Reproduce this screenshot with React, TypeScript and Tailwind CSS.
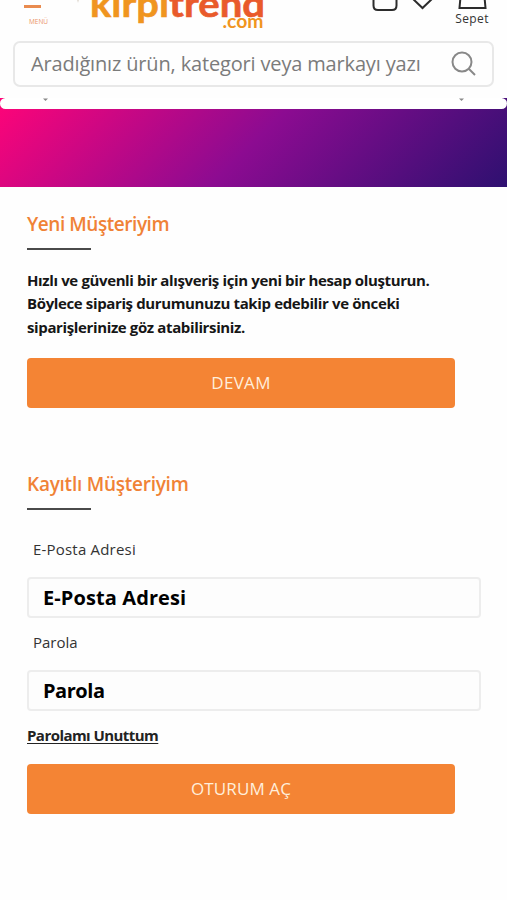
import type { ReactNode } from 'react';

interface FieldProps {
    id: string;
    label: string;
    type: string;
    labelClass: string;
    inputClass: string;
}

function SectionTitle({ className, children }: { className: string; children: ReactNode }) {
    return (
        <>
            <h2 className={`h-6 whitespace-nowrap text-[19px] leading-6 font-semibold text-[#f08236] ${className}`}>{children}</h2>
            <div className="mt-3 h-[2px] w-16 bg-[#4a4a4a]" />
        </>
    );
}

function Field({ id, label, type, labelClass, inputClass }: FieldProps) {
    return (
        <div>
            <label htmlFor={id} className={`block h-5 pl-[6px] text-[15px] leading-5 text-[#333] ${labelClass}`}>
                {label}
            </label>
            <input
                id={id}
                type={type}
                placeholder={label}
                className={`mt-[18px] block h-[41px] w-full rounded-[4px] border-2 border-[#ededed] bg-[#fdfdfd] px-[14px] text-xl font-bold text-black outline-none placeholder:text-black placeholder:opacity-100 ${inputClass}`}
            />
        </div>
    );
}

function Logo() {
    return (
        <svg className="absolute top-0 left-[76px]" width="192" height="32" viewBox="76 0 192 32" aria-label="kirpitrend.com">
            <path d="M77 0H79L78 3Z" fill="#e3ddd5" />
            <g fontFamily="Lato, 'Open Sans', sans-serif" fontWeight="700" strokeWidth="0.600">
                <text x="90" y="16.500" fontSize="36" fill="#f0951f" stroke="#f0951f" textLength="79" lengthAdjust="spacingAndGlyphs">kirpi</text>
                <text x="169" y="16.500" fontSize="36" fill="#e95a2b" stroke="#e95a2b" textLength="96" lengthAdjust="spacingAndGlyphs">trend</text>
                <text x="222.500" y="28" fontSize="18" fill="#f0951f" textLength="41" lengthAdjust="spacingAndGlyphs">.com</text>
            </g>
        </svg>
    );
}

function Header() {
    return (
        <header className="h-[98px] bg-[#fefefe]">
            <div className="relative flex h-[41px] justify-between overflow-hidden">
                <button className="flex w-[77px] flex-col items-center pt-[5px]">
                    <span className="mr-[13px] h-[3px] w-[17px] bg-[#e98b4f]" />
                    <span className="mt-[9px] text-[6.500px] leading-[10px] font-medium text-[#eb9468]">MENÜ</span>
                </button>
                <Logo />
                <div className="flex">
                    <svg width="68" height="12" viewBox="370 0 68 12" fill="none" stroke="#2c2c2c" strokeWidth="2">
                        <path d="M374.500 -4V5.500Q374.500 10 379 10H393Q397.500 10 397.500 5.500V-4" />
                        <path d="M412.500 -2.500L423.500 8L434.500 -2.500" />
                    </svg>
                    <div className="flex w-[70px] flex-col items-center">
                        <svg width="32" height="10" viewBox="0 0 32 10" fill="none" stroke="#2c2c2c" strokeWidth="2">
                            <path d="M4.500 -3L3.500 8H29.500L28.500 -3" />
                        </svg>
                        <span className="mt-px text-[12px] leading-4 font-medium tracking-[0.4px] text-[#333]">Sepet</span>
                    </div>
                </div>
            </div>
            <div className="mx-[13px] flex h-[46px] items-center rounded-[7px] border-2 border-[#e8e8e8] bg-[#fefefe] pl-[16px]">
                <input
                    type="text"
                    placeholder="Aradığınız ürün, kategori veya markayı yazın"
                    className="w-[389px] text-[20px] tracking-[-0.16px] text-[#777] outline-none placeholder:text-[#7b7b7b] placeholder:opacity-100"
                />
                <svg className="ml-[30px]" width="28" height="28" viewBox="0 0 28 28" fill="none" stroke="#888" strokeWidth="2">
                    <circle cx="12" cy="12" r="9.500" />
                    <path d="M18.500 18.500L25 25" />
                </svg>
            </div>
        </header>
    );
}

function Banner() {
    return (
        <div className="h-[89px] bg-[linear-gradient(135deg,#ff0478_0%,#8c0b91_50%,#2e1070_100%)]">
            <div className="flex h-[11px] justify-between rounded-[6px] bg-white px-[43px]">
                <svg width="5" height="3" viewBox="0 0 5 3"><path d="M0 0.500H5L2.500 3Z" fill="#888" /></svg>
                <svg width="5" height="3" viewBox="0 0 5 3"><path d="M0 0.500H5L2.500 3Z" fill="#888" /></svg>
            </div>
        </div>
    );
}

export default function App() {
    return (
        <div className="min-h-[900px] w-[507px] bg-[#fefefe] font-['Open_Sans','Noto_Sans',sans-serif]">
            <Header />
            <Banner />
            <main className="pr-[26px] pl-[27px]">
                <section className="pt-[25px]">
                    <SectionTitle className="tracking-[-0.450px]">Yeni Müşteriyim</SectionTitle>
                    <p className="mt-[19px] text-[15px] leading-[23.300px] font-bold tracking-[-0.370px] whitespace-nowrap text-[#161616]">
                        Hızlı ve güvenli bir alışveriş için yeni bir hesap oluşturun.
                        <br />
                        Böylece sipariş durumunuzu takip edebilir ve önceki
                        <br />
                        siparişlerinize göz atabilirsiniz.
                    </p>
                    <button className="mt-[19px] block h-[50px] w-[428px] rounded-[4px] bg-[#f48434] text-[17px] tracking-[0.3px] text-[#ffeedb]">DEVAM</button>
                </section>
                <section className="pt-[64px]">
                    <SectionTitle className="tracking-[-0.250px]">Kayıtlı Müşteriyim</SectionTitle>
                    <form className="mt-[29px] flex flex-col gap-[14px]">
                        <Field id="email" label="E-Posta Adresi" type="email" labelClass="tracking-[0.200px]" inputClass="tracking-[0.100px]" />
                        <Field id="password" label="Parola" type="password" labelClass="" inputClass="tracking-[-0.450px]" />
                    </form>
                    <a href="#" className="mt-[14px] block h-5 w-fit text-[15px] leading-5 font-bold tracking-[-0.550px] whitespace-nowrap text-[#222] underline underline-offset-2">
                        Parolamı Unuttum
                    </a>
                    <button className="mt-[19px] block h-[50px] w-[428px] rounded-[4px] bg-[#f48434] text-[17px] tracking-[0.100px] text-[#ffeedb]">OTURUM AÇ</button>
                </section>
            </main>
        </div>
    );
}
